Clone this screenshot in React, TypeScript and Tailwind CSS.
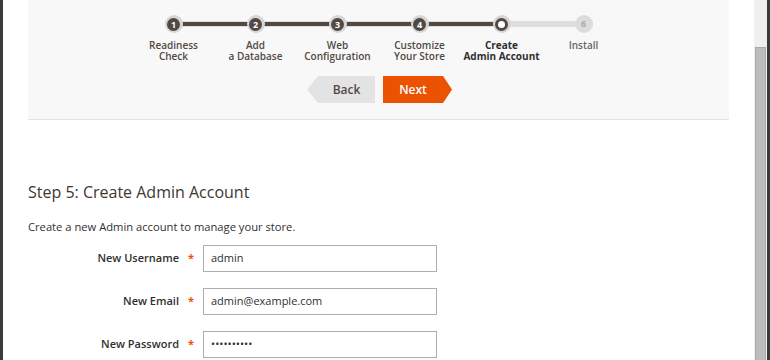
import * as React from 'react'

const STEPS = [
  {lines: ['Readiness', 'Check'], state: 'done'},
  {lines: ['Add', 'a Database'], state: 'done'},
  {lines: ['Web', 'Configuration'], state: 'done'},
  {lines: ['Customize', 'Your Store'], state: 'done'},
  {lines: ['Create', 'Admin Account'], state: 'active'},
  {lines: ['Install'], state: 'todo'},
]

const FIELDS = [
  {label: 'New Username', value: 'admin'},
  {label: 'New Email', value: 'admin@example.com'},
  {label: 'New Password', value: '••••••••••'},
]

function StepDot({n, state}: {n: number; state: string}) {
  if (state === 'todo') {
    return (
      <div className="flex h-[18px] w-[18px] items-center justify-center rounded-full bg-[#dcdcdc] text-[9px] font-bold text-[#a9a9a9]">
        {n}
      </div>
    )
  }
  return (
    <div className="flex h-[18px] w-[18px] items-center justify-center rounded-full bg-[#d6d6d6]">
      {state === 'active' ? (
        <div className="h-[13px] w-[13px] rounded-full border-[3px] border-[#514943] bg-white" />
      ) : (
        <div className="flex h-[13px] w-[13px] items-center justify-center rounded-full bg-[#514943] text-[9px] leading-none font-bold text-white">
          {n}
        </div>
      )}
    </div>
  )
}

function Progress() {
  return (
    <div className="relative mx-auto grid w-[492px] grid-cols-6 pt-[15px]">
      <div className="absolute top-[21px] left-[41px] h-[6px] w-[410px] bg-[#dedede]" />
      <div className="absolute top-[22px] left-[41px] h-[4px] w-[328px] bg-[#514943]" />
      {STEPS.map((s, i) => (
        <div key={i} className="relative flex flex-col items-center">
          <StepDot n={i + 1} state={s.state} />
          <div
            className={
              'mt-[7px] text-center text-[10px] leading-[11px] whitespace-nowrap ' +
              (s.state === 'active'
                ? 'font-bold text-[#303030]'
                : s.state === 'todo'
                  ? 'font-semibold text-[#666]'
                  : 'font-semibold text-[#514943]')
            }
          >
            {s.lines.map(l => (
              <div key={l}>{l}</div>
            ))}
          </div>
        </div>
      ))}
    </div>
  )
}

export default function App() {
  return (
    <div className="flex h-[360px] w-[770px] overflow-hidden bg-white font-['Open_Sans',sans-serif]">
      <div className="w-[3px] bg-[#3a3a3a]" />
      <div className="flex-1 px-[25px]">
        <div className="h-[120px] border-b border-[#e3e3e3] bg-[#f8f8f8]">
          <Progress />
          <div className="mt-[14px] flex justify-center gap-[8px] pl-[2px]">
            <button className="flex h-[27px] w-[68px] items-center justify-center bg-[#e3e3e3] pl-[11px] text-[12px] font-semibold text-[#514943] [clip-path:polygon(11px_0,100%_0,100%_100%,11px_100%,0_50%)]">
              Back
            </button>
            <button className="flex h-[27px] w-[69px] items-center justify-center bg-[#eb5202] pr-[9px] text-[12px] font-semibold text-white [clip-path:polygon(0_0,calc(100%_-_9px)_0,100%_50%,calc(100%_-_9px)_100%,0_100%)]">
              Next
            </button>
          </div>
        </div>
        <h2 className="mt-[60px] text-[16px] leading-[24px] text-[#41362f]">
          Step 5: Create Admin Account
        </h2>
        <p className="mt-[14px] text-[11.2px] leading-[18px] text-[#303030]">
          Create a new Admin account to manage your store.
        </p>
        <div className="mt-[9px] flex flex-col gap-[16px]">
          {FIELDS.map(f => (
            <div key={f.label} className="flex items-center">
              <label className="w-[151px] text-right text-[11px] font-semibold text-[#303030]">
                {f.label}
              </label>
              <span className="w-[24px] text-center text-[11px] font-bold text-[#eb5202]">
                *
              </span>
              <div className="flex h-[27px] w-[234px] items-center border border-[#adadad] bg-white px-[7px] text-[11px] text-[#303030]">
                {f.value}
              </div>
            </div>
          ))}
        </div>
      </div>
      <div className="relative w-[13px] bg-[#efefef]">
        <div className="absolute top-[47px] left-[1px] h-[320px] w-[11px] border border-[#a8a8a8] bg-[#bcbcbc]" />
      </div>
      <div className="w-[3px] bg-[#3a3a3a]" />
    </div>
  )
}
